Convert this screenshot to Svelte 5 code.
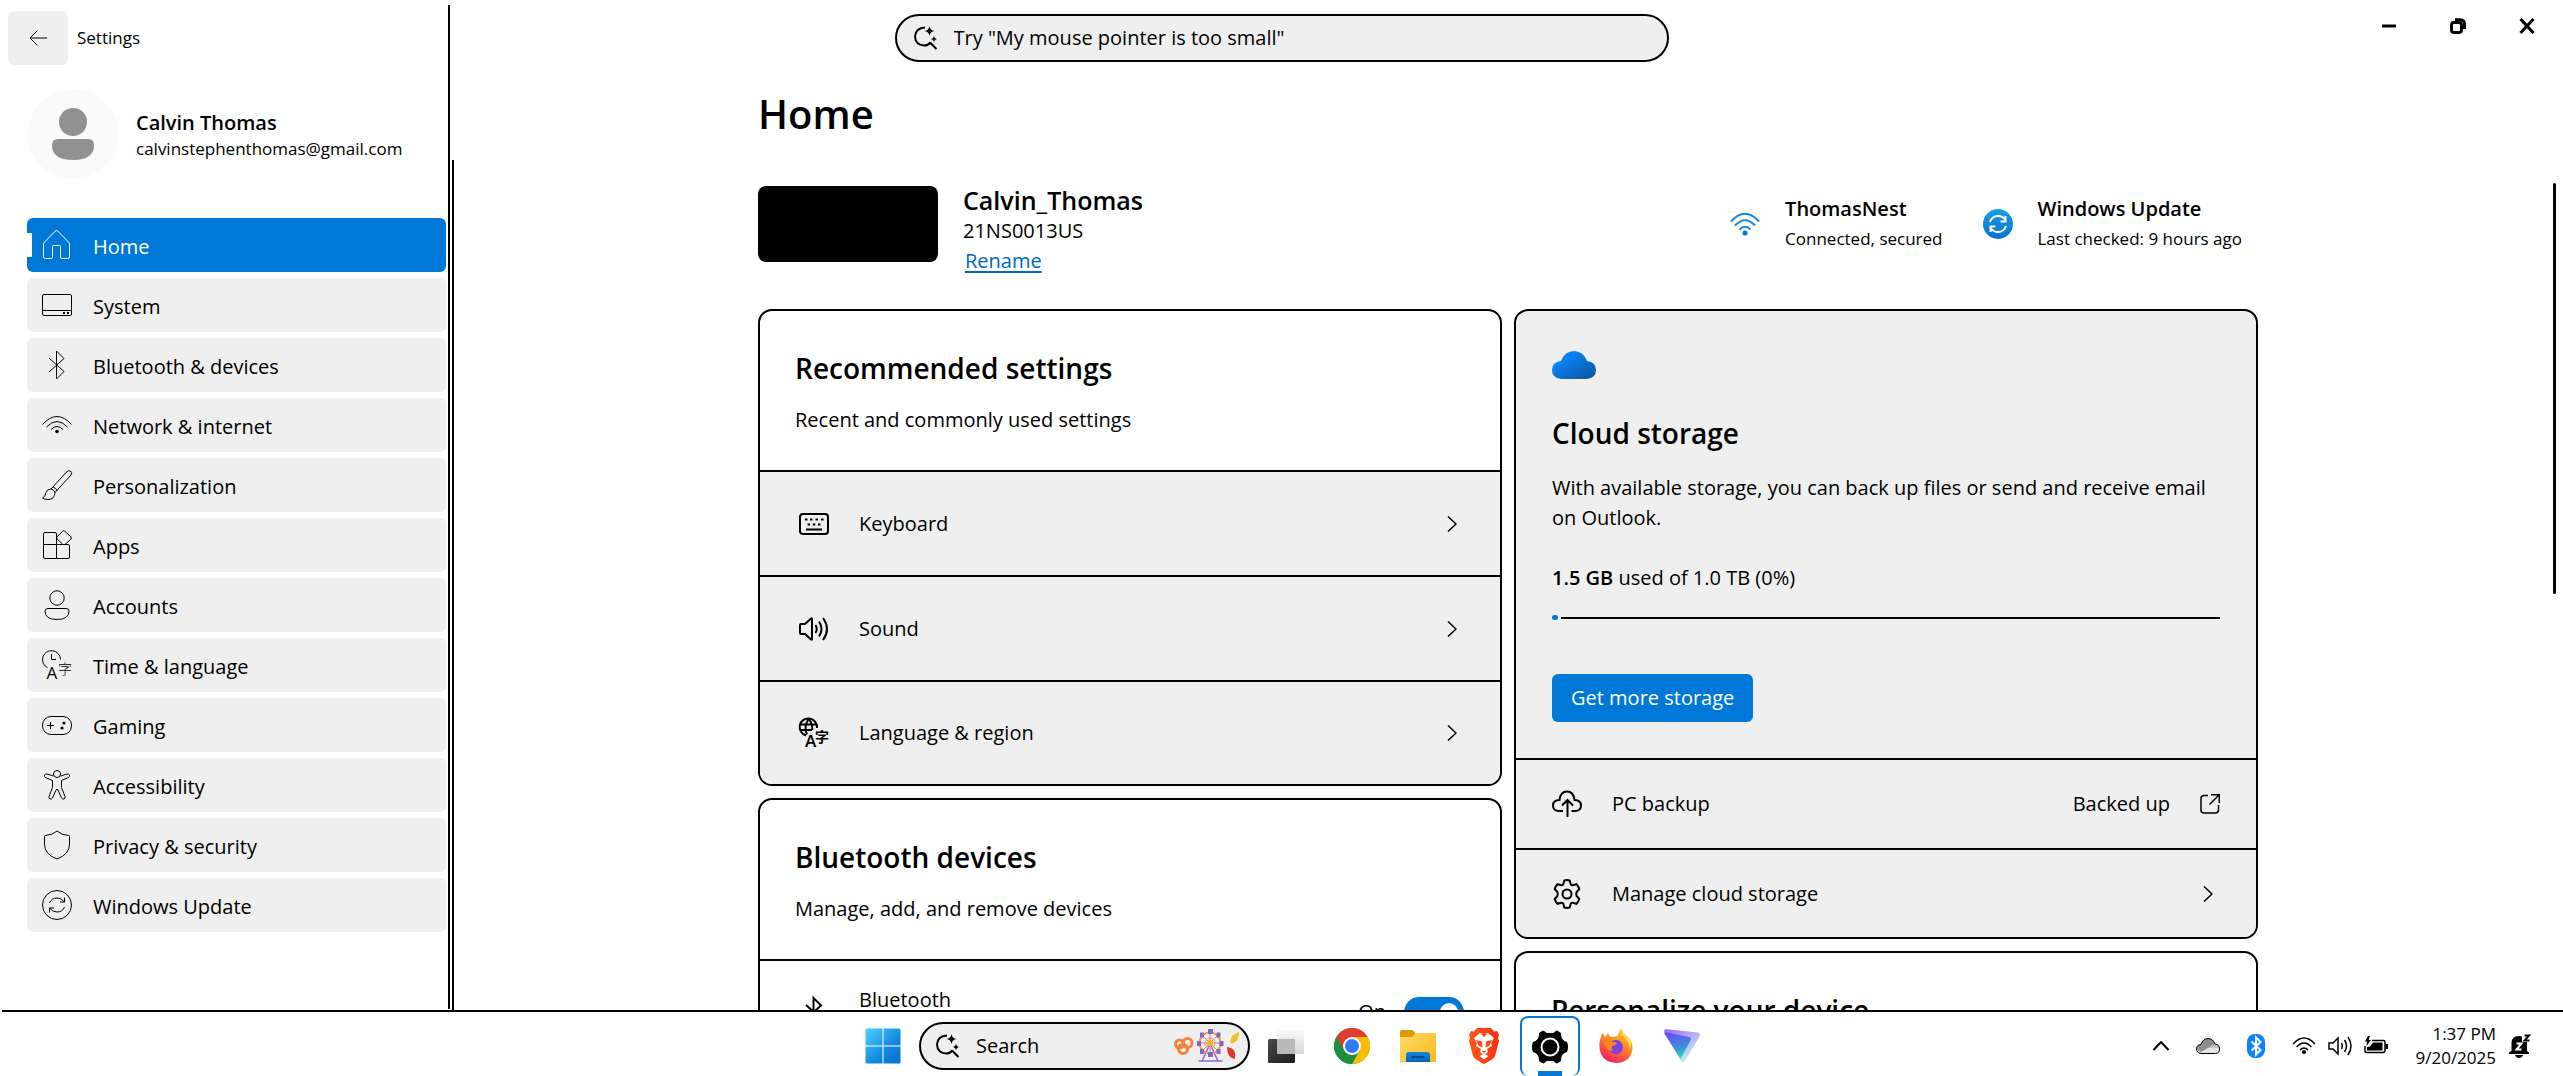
<script lang="ts">
  const nav = [
    { id: 'home', label: 'Home' },
    { id: 'system', label: 'System' },
    { id: 'bluetooth', label: 'Bluetooth & devices' },
    { id: 'wifi', label: 'Network & internet' },
    { id: 'brush', label: 'Personalization' },
    { id: 'apps', label: 'Apps' },
    { id: 'account', label: 'Accounts' },
    { id: 'time', label: 'Time & language' },
    { id: 'gaming', label: 'Gaming' },
    { id: 'access', label: 'Accessibility' },
    { id: 'shield', label: 'Privacy & security' },
    { id: 'update', label: 'Windows Update' }
  ];
  const recommended = [
    { id: 'keyboard', label: 'Keyboard' },
    { id: 'sound', label: 'Sound' },
    { id: 'language', label: 'Language & region' }
  ];
  const pinned = ['Task view', 'Google Chrome', 'File Explorer', 'Brave', 'Settings', 'Firefox', 'Proton VPN'];

  let current = $state('home');
  let bluetoothOn = $state(true);
  let usedPercent = $state(0);
</script>

{#snippet icon(name: string)}
  <svg class="icon" viewBox="0 0 30 30" aria-hidden="true">
    {#if name === 'home'}
      <path d="M1.5 13.2 13 1.3q1.5-1.4 3 0l11.500 11.900V26.500q0 2-2 2h-5.500q-1.500 0-1.500-1.500V16.500q0-1-1-1h-6q-1 0-1 1V27q0 1.500-1.500 1.500H3.500q-2 0-2-2z" />
    {:else if name === 'system'}
      <rect x=".5" y="4.500" width="29" height="21" rx="1.500" /><path d="M.5 20.500h29" />
      <path class="solid" d="M21 22h2v2h-2zM25 22h2v2h-2z" />
    {:else if name === 'bluetooth'}
      <path d="M7 8l15 13.500-7.500 7.500V1L22 8.500 7 22" />
    {:else if name === 'wifi'}
      <path d="M.5 14.500q14.500-16 29 0M4.500 17q10.500-11 21 0M9 19.500q6-6 12 0" /><circle class="solid" cx="15" cy="21.500" r="1.800" />
    {:else if name === 'brush'}
      <path d="M9 19 24.500 2q2-2 4-1t.5 4L13 22.500M9 19q-4 0-5 3.500-.5 4-3.500 5.500 2 1.500 5.500 1.500 6.500 0 7-7Q12 19.500 9 19zM11 17q3 1 4 3.500" />
    {:else if name === 'apps'}
      <path d="M14.500 14.500h-13V4q0-1.500 1.500-1.500h10q1.500 0 1.500 1.500v24.500H3q-1.500 0-1.500-1.500V14.500M14.500 14.500h11.500q1.500 0 1.500 1.500v11q0 1.500-1.500 1.500H14.500M20.500 1.300q1.200-1.200 2.400 0l6 5.500q1.200 1.200 0 2.400l-6 5.300h-2L15.200 9q-1.200-1.200 0-2.300z" />
    {:else if name === 'account'}
      <circle cx="15" cy="8" r="7.200" /><path d="M6 18.500h18q3 0 3 2.500 0 8.500-12 8.500T3 21q0-2.500 3-2.500z" />
    {:else if name === 'time'}
      <path d="M5.500 17.700A9 9 0 1 1 18.500 9.500M9.500 4v5.500H14" />
      <text class="latin" x="4.500" y="29">A</text><text class="han" x="16" y="24">字</text>
    {:else if name === 'gaming'}
      <rect x=".5" y="6.500" width="29" height="18" rx="8.500" /><path d="M8.500 12v7M5 15.500h7" />
      <circle class="solid" cx="22" cy="13" r="1.600" /><circle class="solid" cx="20" cy="18" r="1.600" />
    {:else if name === 'access'}
      <circle cx="15" cy="4" r="3.500" />
      <path d="M11.500 6 5 4q-2-.2-2.500 1.200T3.500 7.500l7 3v7l-3.500 9q-.4 2 1 2.500t2.500-1l3.500-8q1-1.500 2 0l3.500 8q1 1.500 2.500 1t1-2.500l-3.500-9v-7l7-3q1.500-1 1-2.300T25 4l-6.500 2" />
    {:else if name === 'shield'}
      <path d="M15 1q4.500 4 11.500 4.500 1 0 1 1V14q0 10.500-12.500 15Q2.500 24.500 2.500 14V6.500q0-1 1-1Q10.500 5 15 1z" />
    {:else if name === 'update'}
      <circle cx="15" cy="15" r="14.500" /><path d="M7.500 13q2-5 7.500-5 4.500 0 7.500 4V7.500m0 4.500h-4.500M22.500 17q-2 5-7.500 5-4.500 0-7.500-4v4.500m0-4.500h4.500" />
    {:else if name === 'keyboard'}
      <rect x="1" y="5" width="28" height="20" rx="3" />
      <path d="M7 20.500h16" />
      <path class="solid" d="M6 9.500h2.500v2H6zM11 9.500h2.500v2H11zM16.500 9.500H19v2h-2.500zM22 9.500h2.500v2H22zM8.500 14.500H11v2H8.500zM13.800 14.500h2.500v2h-2.500zM19 14.500h2.500v2H19z" />
    {:else if name === 'sound'}
      <path d="M1 11q0-1 1-1h4l6-5.500q1-.7 1 .5v20q0 1.200-1 .5L6 20H2q-1 0-1-1zM16.500 11q2.500 4 0 8M20 7.500q5 7.500 0 15M24 4q8 11 0 22" />
    {:else if name === 'language'}
      <path d="M7 17.500A8.700 8.700 0 1 1 18 10M9.500 1q-5 8-1.500 15.500M9.500 1q4 4 3.800 11M1.500 6.500h16M1.500 12H13" />
      <text class="latin heavy" x="6" y="29">A</text><text class="han heavy" x="16" y="24">字</text>
    {:else if name === 'backup'}
      <path d="M11 22H7q-6 0-6-5.500T7.500 11Q8.500 2.500 15 2.500T22.500 11Q29 11 29 16.500T23 22h-3.500M15.500 28V11M10 16.500l5.500-5.500 5.500 5.500" />
    {:else if name === 'gear'}
      <circle cx="15" cy="15" r="4.500" />
      <path d="M12.300 1.500q2.700-.8 5.400 0l1 3.700q.5 1.300 2 1l3.800-1q2 2 2.800 4.800l-2.700 3q-.8 2 0 4l2.700 3q-.8 2.800-2.800 4.800l-3.800-1q-1.500-.3-2 1l-1 3.700q-2.700.8-5.400 0l-1-3.700q-.5-1.300-2-1l-3.800 1q-2-2-2.800-4.800l2.700-3q.8-2 0-4L2.700 10q.8-2.800 2.800-4.800l3.800 1q1.500.3 2-1z" />
    {/if}
  </svg>
{/snippet}

{#snippet sparkSearch()}
  <svg class="spark" viewBox="0 0 24 24" aria-hidden="true">
    <path d="M11 1.500Q1.500 2 1 10.500 1.500 19 10 19.500q4 0 6.500-3M16 16.500l6.500 6.500" />
    <path class="solid" d="M15.500 0q.6 4.400 5 5-4.400.6-5 5-.6-4.400-5-5 4.400-.6 5-5zM20 9.500q.4 3.100 3.500 3.500-3.100.4-3.500 3.500-.4-3.100-3.500-3.500 3.100-.4 3.500-3.500z" />
  </svg>
{/snippet}

{#snippet chevron()}
  <svg class="chevron" viewBox="0 0 10 16" aria-hidden="true"><path d="M1 .5 9 8 1 15.500" /></svg>
{/snippet}

{#snippet appIcon(name: string)}
  <svg class="app-icon" viewBox="0 0 36 36" aria-hidden="true">
    {#if name === 'Task view'}
      <rect x="0" y="11" width="27" height="24" rx="1.500" fill="url(#dark)" />
      <rect x="9" y="2" width="27" height="24" rx="1.500" fill="url(#pale)" />
      <path d="M9 11h18v15H10.500Q9 26 9 24.500z" fill="#b9b9b9" />
    {:else if name === 'Google Chrome'}
      <circle cx="18" cy="18" r="18" fill="#34a853" />
      <path d="M18 9h15.600A18 18 0 0 1 18 36l7.800-13.500z" fill="#fbbc04" />
      <path d="M2.400 9A18 18 0 0 1 33.600 9H18l-7.800 13.500z" fill="#e33b2e" />
      <path d="M2.400 9l7.800 13.500L18 27h5.200L18 36A18 18 0 0 1 2.400 9z" fill="#1e8e3e" />
      <circle cx="18" cy="18" r="9" fill="#fff" /><circle cx="18" cy="18" r="7" fill="#2f7df6" />
    {:else if name === 'File Explorer'}
      <path d="M0 3.500Q0 2 1.500 2h11l3 3v6H0z" fill="#dd9b0a" />
      <path d="M0 9h12l4-4h18.500Q36 5 36 6.500V34H0z" fill="url(#folder)" />
      <path d="M6 34v-7q0-3 3-3h18q3 0 3 3v7z" fill="url(#tray)" /><path d="M11.500 29h13" stroke="#064a8b" stroke-width="2" />
    {:else if name === 'Brave'}
      <path d="M11 0h14l3 3.500 3-.5 2 4-1 3 1 3-4 15q-1 3-11 8-10-5-11-8L3 13l1-3-1-3 2-4 3 .5z" fill="url(#brave)" />
      <path d="M18 6l4-1 6 5-3 5 1 3-5 3 1 3-4 3-4-3 1-3-5-3 1-3-3-5 6-5z" fill="#fff" />
      <path d="M10 12l6 1.500.5 6-4-2zM26 12l-6 1.500-.5 6 4-2zM15 6h6l-3 3zM15.500 23h5L18 25z" fill="#ff4713" />
      <path d="M13.500 28 18 25.500l4.500 2.500-4.500 3.500z" fill="#fff" />
    {:else if name === 'Settings'}
      <path d="M11 1.500q2 .5 3.500 2.500h7Q23 2 25 1.500l4 2.500q0 4 1 5.500 1.500 2.500 5 3.500 2 5 0 10-3.500.5-5 3.500-1 2-1 5.500l-4 2.500q-2-.5-3.500-2.500h-7Q13 34 11 34.500L7 32q0-3.500-1-5.500-1.500-3-5-3.500-2-5 0-10 3.500-1 5-3.500Q7 8 7 4z" fill="#000" />
      <circle cx="18" cy="18" r="8.500" fill="none" stroke="#fff" stroke-width="2" />
    {:else if name === 'Firefox'}
      <path d="M3 9q0-3 2-4l2 4 3-4q1 3 3 4l7-1Q20 4 23 0q1 5 6 8 6 6 5.500 12-1 14-16 15Q3 34 1.500 20 1 13 3 9z" fill="url(#fox)" />
      <path d="M24 2q-1 4 3 8t5 11q3-6-1-11-2 1-3-2-3-2-4-6z" fill="#ffe14a" />
      <circle cx="18" cy="19" r="7" fill="#7a3fe0" /><path d="M6 14q4-3 8 0l5 .5q-1 3-5 3.500-1 3 1 5-7 0-9-9z" fill="#ff8a1e" />
    {:else}
      <path d="M0 3q0-2 2.500-1.800L34 4.500q3 1 1.500 4L21 33q-2 2.500-4 0z" fill="url(#vpnPale)" />
      <path d="M0 5q1-1 3-.5L25 9q3 .8 1.500 3.500L16.500 31z" fill="url(#vpn)" />
    {/if}
  </svg>
{/snippet}

<svg class="defs" width="0" height="0" aria-hidden="true">
  <defs>
    <linearGradient id="dark" x1="0" y1="0" x2="1" y2="1"><stop stop-color="#4a4a48" /><stop offset="1" stop-color="#1c1c1c" /></linearGradient>
    <linearGradient id="pale" x1="0" y1="0" x2="0" y2="1"><stop stop-color="#fafafa" /><stop offset="1" stop-color="#d6d6d6" /></linearGradient>
    <linearGradient id="folder" x1="0" y1="0" x2="1" y2="1"><stop stop-color="#ffdc6b" /><stop offset="1" stop-color="#f8b91a" /></linearGradient>
    <linearGradient id="tray" x1="0" y1="0" x2="0" y2="1"><stop stop-color="#1686dc" /><stop offset="1" stop-color="#0467b8" /></linearGradient>
    <linearGradient id="brave" x1="0" y1="0" x2="1" y2="0"><stop stop-color="#ff5a1a" /><stop offset="1" stop-color="#ff2a10" /></linearGradient>
    <linearGradient id="fox" x1=".8" y1="0" x2=".3" y2="1"><stop stop-color="#ffd83a" /><stop offset=".45" stop-color="#ff8a1e" /><stop offset="1" stop-color="#f2166a" /></linearGradient>
    <linearGradient id="vpnPale" x1="0" y1="0" x2=".6" y2="1"><stop stop-color="#8f6ee8" /><stop offset=".5" stop-color="#bcaef8" /><stop offset="1" stop-color="#b5f5ef" /></linearGradient>
    <linearGradient id="vpn" x1=".3" y1="0" x2=".6" y2="1"><stop stop-color="#6a4dff" /><stop offset=".6" stop-color="#3d8fd8" /><stop offset="1" stop-color="#2fe0c0" /></linearGradient>
    <linearGradient id="win" x1="0" y1="0" x2="1" y2="1"><stop stop-color="#4fd3ff" /><stop offset=".6" stop-color="#1287e0" /><stop offset="1" stop-color="#0670cf" /></linearGradient>
    <linearGradient id="cloud" x1="0" y1="0" x2="1" y2="1"><stop offset=".25" stop-color="#0a84f5" /><stop offset="1" stop-color="#0b549c" /></linearGradient>
    <linearGradient id="blue" x1="0" y1="0" x2="0" y2="1"><stop stop-color="#1f9de6" /><stop offset="1" stop-color="#0672d3" /></linearGradient>
  </defs>
</svg>

<div class="desktop">
  <div class="window">
    <aside class="side">
      <div class="pane">
        <div class="profile">
          <svg class="avatar" viewBox="0 0 90 90" aria-hidden="true">
            <circle cx="45" cy="45" r="45" fill="#fafafa" />
            <circle cx="45" cy="33" r="14" fill="#919191" />
            <path d="M30 50h30q6 0 6 6 0 15-21 15T24 56q0-6 6-6z" fill="#919191" />
          </svg>
          <div>
            <div class="strong">Calvin Thomas</div>
            <div class="mail">calvinstephenthomas@gmail.com</div>
          </div>
        </div>
        <nav>
          {#each nav as item}
            <button class="nav-item" class:active={current === item.id} onclick={() => (current = item.id)}>
              {@render icon(item.id)}<span>{item.label}</span>
            </button>
          {/each}
        </nav>
      </div>
      <div class="rule"></div>
      <div class="rule short"></div>
    </aside>

    <header class="titlebar">
      <div class="title-left">
        <button class="back" aria-label="Back">
          <svg width="18" height="16" viewBox="0 0 18 16" aria-hidden="true"><path d="M18 8H1M8.500.5 1 8l7.500 7.500" /></svg>
        </button>
        <span class="small">Settings</span>
      </div>
      <label class="find">
        {@render sparkSearch()}
        <input type="text" aria-label="Find a setting" placeholder={'Try "My mouse pointer is too small"'} />
      </label>
      <div class="window-buttons">
        <button aria-label="Minimize"><svg viewBox="0 0 16 16"><path d="M1 8h14" /></svg></button>
        <button aria-label="Restore"><svg viewBox="0 0 16 16"><rect x="1.500" y="4.500" width="10" height="10" rx="2.500" /><path d="M5 1.700h5q4.500 0 4.500 4.500V11" /></svg></button>
        <button aria-label="Close"><svg viewBox="0 0 16 16"><path d="m1.500 1 13 14M14.500 1l-13 14" /></svg></button>
      </div>
    </header>

    <main>
      <div class="content">
        <h1>Home</h1>
        <section class="device">
          <div class="wallpaper"></div>
          <div class="names">
            <div class="device-name">Calvin_Thomas</div>
            <div>21NS0013US</div>
            <a href="#rename">Rename</a>
          </div>
          <div class="status">
            <svg class="icon" viewBox="0 0 30 30" aria-hidden="true">
              <path class="wave" d="M1 12.500q14-15.500 28 0M5 16.500q10-10.500 20 0M9.500 20.500q5.500-5.500 11 0" /><circle cx="15" cy="24" r="2.500" fill="#0672d3" />
            </svg>
            <div><div class="strong">ThomasNest</div><div class="small">Connected, secured</div></div>
          </div>
          <div class="status">
            <svg class="icon" viewBox="0 0 30 30" aria-hidden="true">
              <circle cx="15" cy="15" r="15" fill="url(#blue)" />
              <path class="cycle" d="M7 13q2-6 8-6 4.500 0 7.500 4V7m0 5.500H17.500M23 17q-2 6-8 6-4.500 0-7.500-4v4m0-5.500h5" />
            </svg>
            <div><div class="strong">Windows Update</div><div class="small">Last checked: 9 hours ago</div></div>
          </div>
        </section>

        <div class="columns">
          <div class="column">
            <section class="card">
              <div class="card-head"><h2>Recommended settings</h2><p>Recent and commonly used settings</p></div>
              {#each recommended as item}
                <button class="row">{@render icon(item.id)}<span class="grow">{item.label}</span>{@render chevron()}</button>
              {/each}
            </section>
            <section class="card">
              <div class="card-head"><h2>Bluetooth devices</h2><p>Manage, add, and remove devices</p></div>
              <div class="row plain">
                {@render icon('bluetooth')}
                <div class="grow"><label for="bt">Bluetooth</label><div class="hint">Discoverable as "Calvin_Thomas"</div></div>
                <span class="state">{bluetoothOn ? 'On' : 'Off'}</span>
                <input id="bt" class="toggle" type="checkbox" role="switch" bind:checked={bluetoothOn} />
              </div>
            </section>
          </div>

          <div class="column">
            <section class="card compact shaded">
              <div class="storage">
                <svg class="cloud" viewBox="0 0 44 28" aria-hidden="true"><path d="M9 28q-9-1-9-9t9-9Q13 0 22 0t13 10q9 1 9 9t-9 9z" fill="url(#cloud)" /></svg>
                <h2>Cloud storage</h2>
                <p>With available storage, you can back up files or send and receive email on Outlook.</p>
                <p class="used"><b>1.5 GB</b> used of 1.0 TB (0%)</p>
                <div class="meter" role="progressbar" aria-label="Storage used" aria-valuenow={usedPercent}>
                  <div class="fill" style:width="{usedPercent}%"></div><div class="track"></div>
                </div>
                <button class="primary">Get more storage</button>
              </div>
              <button class="row">
                {@render icon('backup')}<span class="grow">PC backup</span><span>Backed up</span>
                <svg class="external" viewBox="0 0 20 20" aria-hidden="true"><path d="M8 1.500H4Q1 1.500 1 4.500V16q0 3 3 3h11.500q3 0 3-3v-5M11 .8h8.300V9M19 1l-9.500 9.500" /></svg>
              </button>
              <button class="row">{@render icon('gear')}<span class="grow">Manage cloud storage</span>{@render chevron()}</button>
            </section>
            <section class="card compact">
              <div class="card-head"><h2>Personalize your device</h2></div>
            </section>
          </div>
        </div>
      </div>
      <div class="scrollbar"></div>
    </main>
  </div>

  <footer class="taskbar">
    <div class="apps">
      <button class="app" aria-label="Start">
        <svg class="app-icon" viewBox="0 0 36 36" aria-hidden="true">
          <path d="M2 .5h15.500v17H.5V2Q.5.500 2 .5zM18.500.5H34q1.500 0 1.500 1.500v15.500h-17zM.5 18.500h17v17H2Q.5 35.500.5 34zM18.500 18.500h17V34q0 1.500-1.500 1.500H18.500z" fill="url(#win)" />
        </svg>
      </button>
      <label class="task-search">
        {@render sparkSearch()}
        <input type="text" aria-label="Search" placeholder="Search" />
        <svg class="festival" viewBox="0 0 66 34" aria-hidden="true">
          <g fill="none" stroke="#f0853a" stroke-width="3">
            <circle cx="5.500" cy="15" r="4" /><circle cx="13.500" cy="14" r="4.500" /><circle cx="9" cy="20" r="4.500" />
          </g>
          <path d="M36 15 28 32M36 15l8 17M24.500 32h24" fill="none" stroke="#8b63dc" stroke-width="1.500" />
          <circle cx="36" cy="14" r="10.500" fill="none" stroke="#ff9b2f" stroke-width="2" />
          <path d="M36 3v22M25 14h22M28 6l16 16M44 6 28 22" stroke="#9a86d8" stroke-width="1" />
          <circle cx="36" cy="14" r="5" fill="none" stroke="#ff9b2f" />
          <circle cx="36" cy="14" r="3" fill="#ffb31c" />
          <path d="M34 0h5v5h-5zM34 23h5v5h-5zM23 12h4v5h-4zM45.500 12h4v5h-4zM26 3.500h4v5h-4zM42.500 3.500h4v5h-4zM26 20h4v5h-4zM42.500 20h4v5h-4z" fill="#7b68c8" />
          <path d="M57 15q-3-8 8-12 1 9-8 12z" fill="#f6c02c" /><path d="M53 18q10 1 8 12-8-1-8-12z" fill="#dc3b32" />
        </svg>
      </label>
      {#each pinned as app}
        <button class="app" class:running={app === 'Settings'} aria-label={app}>{@render appIcon(app)}</button>
      {/each}
    </div>
    <div class="tray">
      <button class="up" aria-label="Show hidden icons"><svg viewBox="0 0 16 10" width="16" height="10"><path d="m.5 9 7.500-8 7.500 8" /></svg></button>
      <svg class="weather" viewBox="0 0 24 16" aria-hidden="true">
        <path d="M5 15.500q-4.500-.5-4.500-4.500T5 6.500Q7 .5 12 .5t7 5.500q4.500.5 4.500 5t-4 4.500z" fill="#e4e4e4" />
        <path d="M1 9.500q1-3 4-3Q7 .5 12 .5t7 5.500L5 14q-4-1-4-4.500z" fill="#8d8d8d" />
        <path d="M12 10 19 6q3.500.5 4 3.500z" fill="#bdbdbd" />
        <path d="M5 15.500q-4.500-.5-4.500-4.500T5 6.500Q7 .5 12 .5t7 5.500q4.500.5 4.500 5t-4 4.500z" />
      </svg>
      <svg class="bt" viewBox="0 0 18 24" aria-hidden="true"><rect width="18" height="24" rx="8" fill="#0a84ff" /><path d="m4.500 7.500 9 8.500-4.500 4.500V3.500L13.500 8l-9 8.500" /></svg>
      <div class="tray-group">
        <svg viewBox="0 0 24 24" aria-hidden="true"><path d="M1 10q11-12 22 0M4.500 13q7.500-8 15 0M8 16q4-4 8 0" /><circle class="solid" cx="12" cy="18" r="2" /></svg>
        <svg viewBox="0 0 24 24" aria-hidden="true"><path d="M1 9h4l5-5v16l-5-5H1zM13.500 9q1.500 3 0 6M16.500 6q4 6 0 12M20 3q6 9 0 18" /></svg>
        <svg viewBox="0 0 24 24" aria-hidden="true"><path d="M8 6.500h11.500q1.500 0 1.500 1.500v8q0 2.500-2 2.500H3q-2 0-2-2V12" /><path class="solid" d="M9 8.500h9.500V16.500H3V13l3-.5zM21.500 10H24v5h-2.500zM4 2 1 7.500h2L2.500 12 7 6H4.500L6 2z" /></svg>
      </div>
      <time class="small">1:37 PM<br />9/20/2025</time>
      <svg class="bell" viewBox="0 0 22 24" aria-hidden="true">
        <path class="solid" d="M2.500 17V9q0-7 7.500-7 2 0 3 .5V8h5v9l2 1.500V20H0v-1.500zM6 21h8q-1 3-4 3t-4-3z" />
        <path class="snooze" d="M7.500 9.500h5l-5 6h5" /><path class="zed" d="M15.500 1.500H20L15.500 6.500H20.500" />
      </svg>
    </div>
  </footer>
</div>

<style>
  :global(body) { margin: 0; background: #fff; }
  .desktop {
    height: 100vh; display: flex; flex-direction: column; overflow: hidden;
    font: 20px/30px 'Open Sans', 'Noto Sans', 'Noto Sans CJK SC', sans-serif; color: #000;
  }
  .defs { position: absolute; }
  button, input { font: inherit; color: inherit; border: 0; margin: 0; padding: 0; background: none; }
  button { text-align: left; }
  svg { flex: none; fill: none; stroke: currentColor; }
  svg :global([fill]:not([fill='none'])) { stroke: none; }
  h1, h2, p { margin: 0; }
  h1 { font-size: 40px; line-height: 48px; font-weight: 600; }
  h2 { font-size: 28px; line-height: 40px; font-weight: 600; }
  .strong { font-weight: 600; }
  .small { font-size: 17px; }
  .grow { flex: 1; }
  .icon { width: 30px; height: 30px; overflow: visible; }
  .solid { fill: currentColor; stroke: none; }
  text { fill: currentColor; stroke: none; }
  .latin { font: 17px 'Open Sans', sans-serif; }
  .han { font: 300 14px 'Noto Sans CJK SC', sans-serif; }
  .latin.heavy { font-weight: 600; }
  .han.heavy { font-weight: 700; }

  .window { flex: 1; min-height: 0; display: grid; grid-template: 76px minmax(0, 1fr) / 454px minmax(0, 1fr); }
  .side { grid-area: 1 / 1 / 3 / 2; display: flex; gap: 2px; min-height: 0; }
  .pane { flex: 1; padding: 89px 0 0 27px; }
  .rule { width: 2px; margin: 5px 0 1px; background: #000; }
  .rule.short { margin: 160px 0 0; }
  .profile { display: flex; align-items: center; gap: 18px; padding-left: 1px; margin-bottom: 39px; }
  .avatar { width: 90px; height: 90px; }
  .mail { font-size: 17px; line-height: 22px; }
  nav { display: flex; flex-direction: column; gap: 6px; }
  .nav-item {
    display: flex; align-items: center; gap: 21px; height: 54px; padding-left: 15px;
    border-radius: 6px; background: #efefef;
  }
  .nav-item span { padding-top: 3px; }
  .nav-item.active { background: linear-gradient(#fff, #fff) 0 50% / 5px 24px no-repeat #0078d7; color: #fff; }

  .titlebar {
    grid-area: 1 / 1 / 2 / 3; display: grid; align-items: start;
    grid-template-columns: minmax(0, 1fr) minmax(0, 774px) minmax(0, 1fr);
  }
  .title-left { display: flex; align-items: center; gap: 9px; padding: 11px 0 0 8px; }
  .back { width: 60px; height: 54px; border-radius: 6px; background: #efefef; display: grid; place-items: center; }
  .find, .task-search {
    box-sizing: border-box; height: 48px; display: flex; align-items: center; gap: 16px;
    border: 2px solid #000; border-radius: 24px; background: #efefef; padding-left: 17px;
  }
  .find { margin-top: 14px; }
  .find input, .task-search input { flex: 1; min-width: 0; outline: 0; }
  input::placeholder { color: #000; opacity: 1; }
  .spark { width: 24px; height: 24px; stroke-width: 2; }
  .window-buttons { display: flex; justify-content: flex-end; padding-right: 2px; }
  .window-buttons button { width: 69px; height: 52px; display: grid; place-items: center; }
  .window-buttons svg { width: 16px; height: 16px; stroke-width: 3; }

  main { grid-area: 2 / 2 / 3 / 3; position: relative; overflow: hidden; padding: 14px 41px 0 40px; }
  .content { max-width: 1500px; margin: 0 auto; }
  .scrollbar { position: absolute; top: 107px; right: 7px; width: 3px; height: 44%; border-radius: 2px; background: #000; }
  .device { display: flex; align-items: flex-start; margin: 46px 0 33px; }
  .wallpaper { width: 180px; height: 76px; margin: 2px 25px 0 0; border-radius: 8px; background: #000; }
  .names { flex: 1; }
  .device-name { font-size: 25px; line-height: 32px; font-weight: 600; }
  .names a { display: inline-block; color: #0067c0; padding-left: 2px; text-underline-offset: 3px; }
  .status { display: flex; align-items: center; gap: 25px; padding: 10px 16px 0 24px; }
  .wave { stroke: #1488dc; stroke-width: 2; }
  .cycle { stroke: #fff; stroke-width: 2; }

  .columns { display: grid; grid-template-columns: repeat(2, minmax(0, 1fr)); gap: 12px; }
  .column { display: flex; flex-direction: column; gap: 12px; }
  .card { border: 2px solid #000; border-radius: 14px; overflow: hidden; }
  .shaded { background: #efefef; }
  .card-head { padding: 37px 35px 35px; }
  .card-head p { margin-top: 17px; }
  .row {
    box-sizing: border-box; width: 100%; height: 105px; border-top: 2px solid #000; background: #efefef;
    display: flex; align-items: center; gap: 30px; padding: 0 43px 0 39px;
  }
  .row .icon { stroke-width: 2; }
  .row:last-child { height: 104px; }
  .row.plain { background: #fff; padding-right: 36px; }
  .compact .row { height: 90px; padding: 0 36px; }
  .compact .row:last-child { height: 89px; padding-right: 43px; }
  .hint { font-size: 17px; line-height: 24px; }
  .state { margin-right: -12px; }
  .chevron { width: 10px; height: 16px; stroke-width: 1.5; }
  .external { width: 20px; height: 20px; stroke-width: 1.5; }
  .toggle { appearance: none; width: 60px; height: 30px; border-radius: 15px; background: #999; padding: 6px; display: flex; box-sizing: border-box; }
  .toggle::before { content: ''; width: 18px; height: 18px; border-radius: 50%; background: #fff; }
  .toggle:checked { background: #0078d7; justify-content: flex-end; }
  .storage { padding: 40px 36px 36px; }
  .cloud { display: block; width: 44px; height: 28px; margin-bottom: 34px; }
  .storage p { margin-top: 20px; }
  .storage .used { margin-top: 30px; }
  .used b { font-weight: 600; }
  .meter { display: flex; align-items: center; gap: 3px; margin: 22px 0 54px; }
  .fill { min-width: 6px; height: 5px; border-radius: 3px; background: #0078d7; }
  .track { flex: 1; height: 2px; background: #000; }
  .primary { display: block; height: 48px; padding: 0 19px; border-radius: 6px; background: #0078d7; color: #fff; }

  .taskbar {
    display: grid; grid-template-columns: 1fr auto 1fr; align-items: start;
    border-top: 2px solid #000; padding-top: 4px; height: 60px; margin-left: 2px;
  }
  .apps { grid-column: 2; display: flex; align-items: center; gap: 6px; height: 60px; }
  .app { box-sizing: border-box; width: 60px; height: 60px; display: grid; place-items: center; }
  .app-icon { width: 36px; height: 36px; }
  .running {
    border: 2px solid #0078d7; border-bottom: 0; border-radius: 8px;
    background: linear-gradient(#0078d7, #0078d7) 50% 100% / 24px 5px no-repeat;
  }
  .task-search { width: 331px; padding: 0 8px 0 15px; }
  .festival { width: 66px; height: 34px; }
  .tray { display: flex; align-items: center; justify-content: flex-end; gap: 27px; height: 60px; padding-right: 32px; }
  .up { display: flex; stroke-width: 2; }
  .weather { width: 24px; height: 16px; }
  .bt { width: 18px; height: 24px; color: #fff; stroke-width: 2; }
  .tray-group { display: flex; gap: 12px; }
  .tray-group svg { width: 24px; height: 24px; stroke-width: 1.5; }
  time { line-height: 24px; text-align: right; }
  .bell { width: 22px; height: 24px; margin-left: -14px; }
  .zed { stroke-width: 2; }
  .snooze { stroke: #fff; stroke-width: 2; }
</style>
